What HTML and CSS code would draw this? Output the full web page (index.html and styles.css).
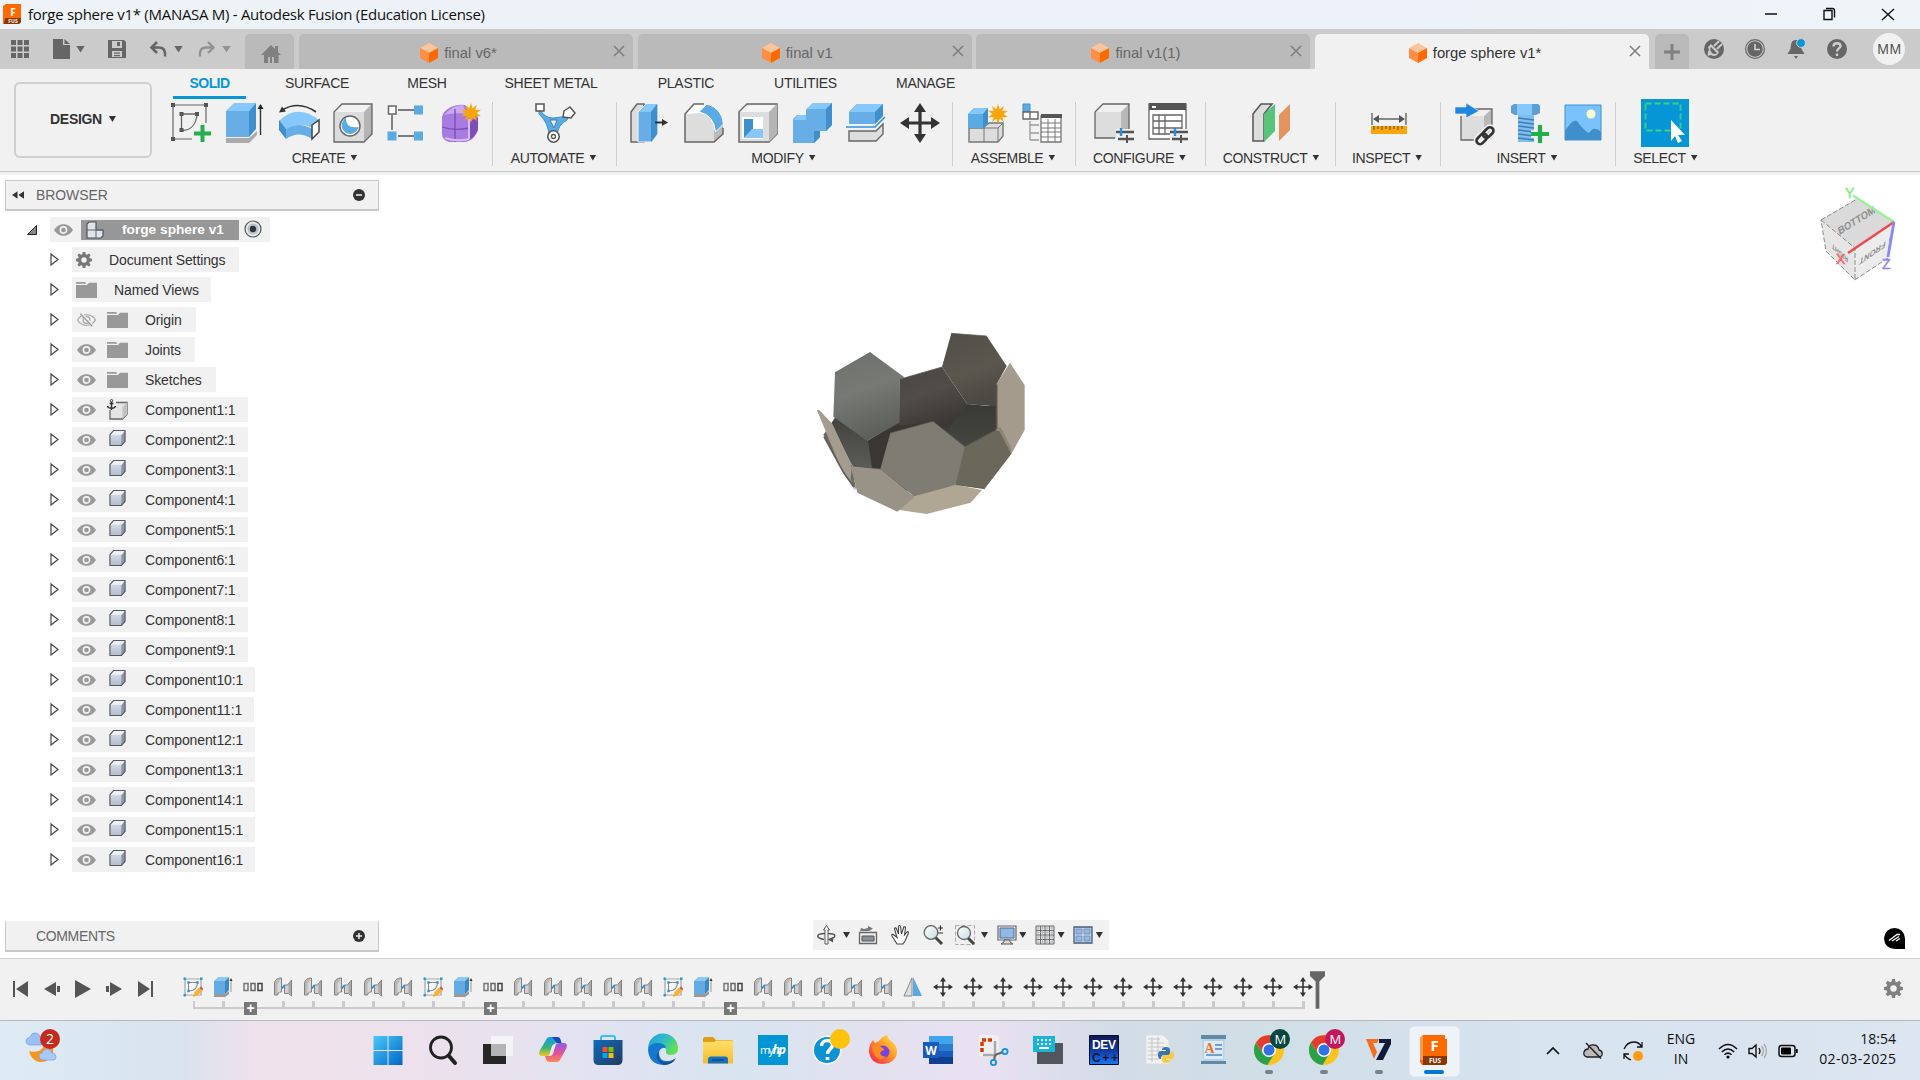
FILE: index.html
```html
<!DOCTYPE html>
<html lang="en">
<head>
<meta charset="utf-8">
<title>forge sphere v1* (MANASA M) - Autodesk Fusion (Education License)</title>
<link rel="stylesheet" href="styles.css">
</head>
<body>
<svg class="defs" aria-hidden="true">
  <defs>
    <linearGradient id="gWin" x1="0" y1="0" x2="1" y2="1"><stop offset="0" stop-color="#4cc8f8"/><stop offset="1" stop-color="#0067c8"/></linearGradient>
    <linearGradient id="gStore" x1="0" y1="0" x2="1" y2="1"><stop offset="0" stop-color="#0f6cbd"/><stop offset="1" stop-color="#243a5e"/></linearGradient>
    <linearGradient id="gEdge" x1="0" y1="0" x2="1" y2=".6"><stop offset="0" stop-color="#1f9fe0"/><stop offset=".5" stop-color="#2ebbc8"/><stop offset="1" stop-color="#63e04f"/></linearGradient>
    <linearGradient id="gFold" x1="0" y1="0" x2="0" y2="1"><stop offset="0" stop-color="#ffdf6b"/><stop offset="1" stop-color="#f7bd2b"/></linearGradient>
    <linearGradient id="gFox" x1="1" y1="0" x2="0" y2="1"><stop offset="0" stop-color="#fff04f"/><stop offset=".45" stop-color="#ff9426"/><stop offset="1" stop-color="#f5155e"/></linearGradient>
    <linearGradient id="gDev" x1="0" y1="0" x2="0" y2="1"><stop offset="0" stop-color="#101850"/><stop offset=".5" stop-color="#1238a0"/><stop offset="1" stop-color="#1c78ee"/></linearGradient>
    <linearGradient id="gCopA" x1="0" y1="0" x2="0" y2="1"><stop offset="0" stop-color="#169be8"/><stop offset=".55" stop-color="#36b27a"/><stop offset="1" stop-color="#f4c81c"/></linearGradient>
    <linearGradient id="gCopB" x1="0" y1="0" x2="0" y2="1"><stop offset="0" stop-color="#8d5cf0"/><stop offset=".5" stop-color="#e0509c"/><stop offset="1" stop-color="#fa8a52"/></linearGradient>
    <linearGradient id="gBody" x1="0" y1="0" x2="0" y2="1"><stop offset="0" stop-color="#dfe3ee"/><stop offset="1" stop-color="#b4bccd"/></linearGradient>
    <linearGradient id="gLens" x1="0" y1="0" x2="1" y2="1"><stop offset="0" stop-color="#fff"/><stop offset="1" stop-color="#c4dce0"/></linearGradient>
  </defs>

  <symbol id="cube" viewBox="0 0 18 20"><path d="M9 0l9 5-9 5-9-5z" fill="#ffc39a"/><path d="M0 5l9 5v10l-9-5z" fill="#ff8f45"/><path d="M18 5l-9 5v10l9-5z" fill="#ff6a00"/></symbol>
  <symbol id="x" viewBox="0 0 12 12"><path d="M1 1l10 10M11 1L1 11" stroke="currentColor" stroke-width="1.6" fill="none"/></symbol>
  <symbol id="eye" viewBox="0 0 20 12"><path d="M0 6C3 1.500 6.500 0 10 0s7 1.500 10 6c-3 4.500-6.500 6-10 6S3 10.500 0 6z" fill="#999"/><circle cx="10" cy="6" r="3.300" fill="none" stroke="#f1f1f1" stroke-width="1.700"/></symbol>
  <symbol id="eyeoff" viewBox="0 0 20 14"><path d="M.5 7C3 3 6.500 1.500 10 1.500S17 3 19.500 7c-2.500 4-6 5.500-9.500 5.500S3 11 .5 7z" fill="none" stroke="#a0a0a0" stroke-width="1.200"/><circle cx="10" cy="7" r="3.600" fill="none" stroke="#a0a0a0" stroke-width="1.300"/><path d="M4.500 .5l12 13" stroke="#f1f1f1" stroke-width="3"/><path d="M3.500 .5l12.500 13" stroke="#999" stroke-width="1.400"/></symbol>
  <symbol id="folder" viewBox="0 0 21 16"><path d="M0 0h9l1.500 1.800h-10.500z" fill="#999"/><path d="M0 3h11l2-2.200h8V16H0z" fill="#999"/></symbol>
  <symbol id="gear" viewBox="0 0 20 20"><path fill-rule="evenodd" fill="currentColor" d="M8.400 0h3.200l.5 2.800 1.600.7L16 1.900 18.200 4.100l-1.600 2.300.6 1.500 2.800.5v3.200l-2.800.5-.6 1.600 1.600 2.300-2.200 2.200-2.300-1.600-1.600.6-.5 2.800H8.400l-.5-2.800-1.600-.6L4 18.200 1.800 16l1.600-2.300-.6-1.600L0 11.600V8.400l2.800-.5.600-1.500L1.800 4.100 4 1.900l2.300 1.600 1.600-.7zM10 6.600a3.400 3.400 0 100 6.800 3.400 3.400 0 000-6.800z"/></symbol>
  <symbol id="body" viewBox="0 0 18 18"><path d="M1 5.500L5 1h12v11.500l-4 4.500H1z" fill="url(#gBody)"/><path d="M13 5.500L17 1v11.500L13 17z" fill="#8d96a6"/><path d="M1.500 5.500L5 1h12l-3.500 4.500z" fill="#eef0f6"/><path d="M1 5.500L5 1h12v11.500l-4 4.500H1z" fill="none" stroke="#54585f" stroke-width="1.200" stroke-linejoin="round"/></symbol>
  <symbol id="anchorbody" viewBox="0 0 21 21"><path d="M3 8.500L7 3.500h13v12L15.500 20H3z" fill="#e4e4e4" stroke="#666" stroke-width="1.300"/><path d="M15.500 8L20 3.500v12L15.500 20z" fill="#c2c2c2"/><path d="M0 0h9v11H0z" fill="#f1f1f1"/><path d="M4.500 3v8M2.500 4.500h4M.6 7c.2 3 7.600 3 7.800 0" fill="none" stroke="#333" stroke-width="1.500"/><circle cx="4.500" cy="1.700" r="1.200" fill="none" stroke="#333"/></symbol>
  <symbol id="tri" viewBox="0 0 9 13"><path d="M1 1l7 5.500L1 12z" fill="#fff" stroke="#444" stroke-width="1.200"/></symbol>

  <symbol id="t-sketch" viewBox="0 0 20 20"><path d="M2 2h16v16H2z" fill="#f8f8f8" stroke="#a4a4a4" stroke-width="1.200"/><path d="M5.500 14V5.500h9c0 5-3 8.500-9 8.500" fill="none" stroke="#8a8a8a" stroke-width="1.100"/><g fill="#2f94e0"><path d="M.5 .5h2.500v2.500H.5zM17 .5h2.500v2.500h-2.500zM.5 17h2.500v2.500H.5zM4.300 4.300h2.400v2.400H4.300zM13.300 4.300h2.400v2.400h-2.400zM4.300 12.800h2.400v2.400H4.300z"/></g><path d="M10 20l1.500-5 5-4.500 3 3-5 5z" fill="#f6b335"/><path d="M16.500 11l1.500-1.500 2 2-.5 2z" fill="#f5413c"/></symbol>
  <symbol id="t-extrude" viewBox="0 0 20 20"><path d="M1 17h11l4-3v3l-4 3H1z" fill="#999"/><path d="M1 4l4-4h11l-4 4z" fill="#8cc8f5"/><path d="M1 4h11v13H1z" fill="#64abe3"/><path d="M12 4l4-4v13l-4 4z" fill="#3b89c4"/><path d="M18 15V3" stroke="#999" stroke-width="1"/><path d="M16.500 4l1.500-3 1.500 3z" fill="#333"/></symbol>
  <symbol id="t-pattern" viewBox="0 0 20 10"><g fill="none" stroke-width="1.500"><path d="M1 1.500h4v7H1z" stroke="#777"/><path d="M8 1.500h4v7H8z" stroke="#666"/><path d="M15 1.500h4v7h-4z" stroke="#3f3f3f"/></g></symbol>
  <symbol id="t-joint" viewBox="0 0 20 20"><path d="M1.500 18V7C1.500 3 4 1 8.500 1v14H6l-1.500 3z" fill="#b9b9b9" stroke="#808080"/><path d="M4.500 16V7l3.500-5.500V14z" fill="#d8d8d8"/><path d="M18.500 3v16l-3-2.500h-4V8h3z" fill="#cfcfcf" stroke="#808080"/><path d="M15.500 16V7.500l2.500-4v14z" fill="#a8a8a8"/><path d="M9 11.500l2.500-3.500" stroke="#2f94e0" stroke-width="2"/></symbol>
  <symbol id="t-mirror" viewBox="0 0 20 20"><path d="M9 1v18H1z" fill="#ddd" stroke="#888"/><path d="M10 0l9 19h-9z" fill="#5aa9e0"/></symbol>
  <symbol id="move" viewBox="0 0 20 20"><path d="M10 0l3 4.500h-2.200v4.700h4.700V7l4.500 3-4.500 3v-2.200h-4.700v4.700H13l-3 4.500-3-4.500h2.200v-4.700H4.500V13L0 10l4.500-3v2.200h4.700V4.500H7z" fill="#333"/></symbol>
  <symbol id="spark" viewBox="0 0 20 20"><path d="M10 0l1.700 5.200L16 1.900l-1.800 5L20 6.700 15.600 10l4.400 3.300-5.800-.2 1.800 5-4.300-3.300L10 20l-1.700-5.200L4 18.100l1.800-5-5.800.2L4.400 10 0 6.700l5.800.2-1.800-5 4.300 3.300z" fill="#faa50a"/></symbol>
  <symbol id="chrome" viewBox="0 0 30 30"><circle cx="15" cy="15" r="15" fill="#fcc31e"/><path d="M2 7.500A15 15 0 0013.500 30l7-11.500-11.500 0z" fill="#2c9f4b"/><path d="M2 7.500A15 15 0 0128 7.800H15L9 18z" fill="#e33b2e"/><circle cx="15" cy="15" r="7" fill="#fff"/><circle cx="15" cy="15" r="5.500" fill="#2f72e8"/></symbol>
  <symbol id="plus" viewBox="0 0 17 17"><path d="M6 0h5v6h6v5h-6v6H6v-6H0V6h6z" fill="#f1f1f1" stroke="#f1f1f1" stroke-width="2"/><path d="M6.500 0h4v6.500H17v4h-6.500V17h-4v-6.500H0v-4h6.500z" fill="#22b04d"/></symbol>
</svg>

<header class="titlebar">
  <svg class="app-icon" viewBox="0 0 18 20"><path d="M0 2l3-2h15v18l-2 2H0z" fill="#ff6a00"/><path d="M2 14h16v4l-2 2H1z" fill="#8a3600"/><text x="10" y="11.500" class="svg-f">F</text><text x="10" y="18.500" class="svg-tiny">FUS</text></svg>
  <span class="title">forge sphere v1* (MANASA M) - Autodesk Fusion (Education License)</span>
  <svg class="win-btns" viewBox="0 0 160 30"><g fill="none" stroke="#111" stroke-width="1.400"><path d="M5 14h12M64 10.500h8v9h-8zM66 8.500h6.500q2 0 2 2v7"/><path d="M122 9l12 11M134 9l-12 11"/></g></svg>
</header>

<nav class="tabbar">
  <div class="quick">
    <svg class="q-grid" viewBox="0 0 18 18"><path fill="#666" d="M0 0h5v5H0zM6.500 0h5v5h-5zM13 0h5v5h-5zM0 6.500h5v5H0zM6.500 6.500h5v5h-5zM13 6.500h5v5h-5zM0 13h5v5H0zM6.500 13h5v5h-5zM13 13h5v5h-5z"/></svg>
    <svg class="q-doc" viewBox="0 0 17 20"><path fill="#666" d="M0 0h10v6h7v14H0zM11.500 0L17 5h-5.500z"/></svg><i class="caret big"></i>
    <svg class="q-save" viewBox="0 0 18 18"><path fill="#666" fill-rule="evenodd" d="M0 0h16l2 2v16H0zM4 1v7h10V1zM4 11v6h10v-6z"/><path fill="#666" d="M9 2h3v4H9zM6 12.500h6v1.200H6zM6 15h6v1.200H6z"/></svg>
    <svg class="q-undo" viewBox="0 0 17 17"><path d="M7 1L1.500 6.500 7 12M2 6.500h7q7 0 6 9" fill="none" stroke="#666" stroke-width="2.600"/></svg><i class="caret big"></i>
    <svg class="q-redo" viewBox="0 0 17 17"><path d="M10 1l5.500 5.500L10 12M15 6.500H8q-7 0-6 9" fill="none" stroke="#929292" stroke-width="2.400"/></svg><i class="caret big dim"></i>
  </div>
  <div class="tab home"><svg viewBox="0 0 20 18"><path d="M10 0l4 4V1h3v6l3 3h-2.500v8H13v-6H11v6H9v-6H7v6H3v-8H0z" fill="#808080"/></svg></div>
  <div class="tab"><svg class="cube"><use href="#cube"/></svg><span>final v6*</span><svg class="close"><use href="#x"/></svg></div>
  <div class="tab"><svg class="cube"><use href="#cube"/></svg><span>final v1</span><svg class="close"><use href="#x"/></svg></div>
  <div class="tab"><svg class="cube"><use href="#cube"/></svg><span>final v1(1)</span><svg class="close"><use href="#x"/></svg></div>
  <div class="tab active"><svg class="cube"><use href="#cube"/></svg><span>forge sphere v1*</span><svg class="close"><use href="#x"/></svg></div>
  <div class="tab add"><svg viewBox="0 0 16 16"><path d="M8 0v16M0 8h16" stroke="#808080" stroke-width="3"/></svg></div>
  <div class="status">
    <svg viewBox="0 0 20 20"><circle cx="10" cy="10" r="10" fill="#666"/><path d="M4 17q-1-4 1-6l-1-3 3-3 4 4 4 4-2 3q-3 2-6 0z" fill="#cbcbcb"/><path d="M8 14q-3-4-1-6l6 6q-2 2-5 0z" fill="#666"/><path d="M10 7l5-5M13 10l5-5" stroke="#cbcbcb" stroke-width="2"/></svg>
    <svg viewBox="0 0 20 20"><circle cx="10" cy="10" r="9.400" fill="none" stroke="#666" stroke-width="1.200"/><circle cx="10" cy="10" r="7.700" fill="#666"/><path d="M10 5v5.500h5" fill="none" stroke="#d6d6d6" stroke-width="1.500"/></svg>
    <svg viewBox="0 0 20 20"><path d="M10 1c5 0 5 4 5.500 9l3 5h-17l3-5C5 5 5 1 10 1zM8 17h4l-2 3z" fill="#666"/><circle cx="15" cy="4" r="4.400" fill="#0696d7" stroke="#cbcbcb"/></svg>
    <svg viewBox="0 0 20 20"><circle cx="10" cy="10" r="10" fill="#666"/><path d="M6.500 7.500c0-4.500 7-4 7-.5 0 2.500-3.500 2.500-3.500 5.500M10 14.500V17" fill="none" stroke="#d0d0d0" stroke-width="2.300"/></svg>
    <b class="avatar">MM</b>
  </div>
</nav>

<section class="ribbon">
  <div class="workspace">DESIGN<i class="caret"></i></div>
  <div class="ribbon-main">
    <div class="rtabs"><span class="on">SOLID</span><span>SURFACE</span><span>MESH</span><span>SHEET METAL</span><span>PLASTIC</span><span>UTILITIES</span><span>MANAGE</span></div>
    <div class="panels">
      <div class="panel create"><div class="icons">
        <svg viewBox="0 0 40 40"><path d="M2 2h33M35 2v18M2 2v34h19" fill="none" stroke="#666" stroke-width="1.200"/><path d="M10.500 11h15M10.500 11v15M26 12c-1 9-6 15-14 15.500" fill="none" stroke="#666" stroke-width="1.300"/><path d="M0 0h4v4H0zM33 0h4v4h-4zM0 34h4v4H0zM8.500 9h4v4h-4zM24 9h4v4h-4zM8.500 25h4v4h-4z" fill="#555"/><use href="#plus" x="23" y="22" width="17" height="17"/></svg>
        <svg viewBox="0 0 40 40"><path d="M1 35h23l8-7v4l-8 8H1z" fill="#aaa"/><path d="M1 8l8-8h22l-7 8z" fill="#86c8fb"/><path d="M1 8h23v26H1z" fill="#67aee6"/><path d="M24 8l7-8v26l-7 8z" fill="#3f8fcd"/><path d="M35.500 32V5" stroke="#333" stroke-width="1.400"/><path d="M32.500 6l3-5 3 5z" fill="#222"/></svg>
        <svg viewBox="0 0 40 40"><path d="M3 7q17-10 34 2" fill="none" stroke="#333" stroke-width="1.600"/><path d="M0 9.500l3-6 4 5z" fill="#333"/><path d="M0 18q18-18 40-1l-7 8q-12-7-26 1z" fill="#86c8fb"/><path d="M0 17l7 9v10l-7-9z" fill="#3f8fcd"/><path d="M7 26q13-8 26 0v10q-13-9-26 0z" fill="#67aee6"/><path d="M33 22l7-5v12l-7 7z" fill="#fff" stroke="#444" stroke-width="1.500"/></svg>
        <svg viewBox="0 0 40 40"><path d="M1 9l8-8h30v30l-8 8H1z" fill="#dcdcdc"/><path d="M2 9l7-8h29l-7 8z" fill="#f2f2f2"/><path d="M31 9l8-8v30l-8 8z" fill="#b5b5b5"/><path d="M1 9l8-8h30v30l-8 8H1z" fill="none" stroke="#666" stroke-width="1.300"/><circle cx="17" cy="23" r="10" fill="#fff" stroke="#666" stroke-width="1.500"/><path d="M13 15a8.500 8.500 0 1012.500 9q-13 2-12.500-9z" fill="#5aaae4"/></svg>
        <svg viewBox="0 0 40 40"><path d="M11 7h16M5 12v15M11 33h16" fill="none" stroke="#555" stroke-width="1.400"/><path d="M1.500 3h7.500v8H1.500z" fill="#fff" stroke="#666" stroke-width="1.500"/><path d="M27 2.500h9v9h-9zM.5 28.500h9v9h-9zM27 28.500h9v9h-9z" fill="#5aaae4"/></svg>
        <svg viewBox="0 0 40 40"><path d="M1 14Q2 8 10 4q7-3 14-2l13 12v12q-3 11-12 13H8q-7-2-7-8z" fill="#a77be0"/><path d="M28 18l9-3v12q-3 7-9 10z" fill="#7d4fb8"/><path d="M3 12Q12 2 22 2l4 9q-13-2-23 1z" fill="#c9a8f3"/><path d="M14 6v33M1 24q12 4 27 1l9-5" fill="none" stroke="#7a4cb4" stroke-width="1.300"/><path d="M28 16v20M4 35q12 4 24 1" fill="none" stroke="#d5bdf6" stroke-width="2"/><use href="#spark" x="20" y="0" width="20" height="20"/></svg>
      </div><p>CREATE<i class="caret"></i></p></div>
      <div class="panel automate"><div class="icons">
        <svg viewBox="0 0 40 40"><path d="M4 5q5 10 14 10 9 0 16-4l-2 6q-10 5-10 17l-8 0q0-14-10-23z" fill="#5aaae4" stroke="#3f8fcd"/><path d="M15 17h7l-3 8z" fill="#f1f1f1" stroke="#3a7fb8"/><path d="M1 1h8v7H1z" fill="#fff" stroke="#555" stroke-width="1.500"/><path d="M29 8l6-4 5 6-4 5-8-1z" fill="#fff" stroke="#555" stroke-width="1.500"/><circle cx="18.500" cy="33.500" r="5.700" fill="#fff" stroke="#555" stroke-width="1.600"/><circle cx="18.500" cy="33.500" r="2" fill="none" stroke="#555" stroke-width="1.300"/></svg>
      </div><p>AUTOMATE<i class="caret"></i></p></div>
      <div class="panel modify"><div class="icons">
        <svg viewBox="0 0 40 40"><path d="M1 9l6-8h7v38H1z" fill="#dcdcdc" stroke="#666" stroke-width="1.500"/><path d="M8 9l8-8h12v30l-6 8H8z" fill="#67aee6" stroke="#f1f1f1"/><path d="M9 9l7-8h11l-6 8z" fill="#86c8fb"/><path d="M21 9l6-8v30l-6 8z" fill="#3f8fcd"/><path d="M25 19.500h8" stroke="#333" stroke-width="2"/><path d="M32 16l6 3.500-6 3.500z" fill="#333"/></svg>
        <svg viewBox="0 0 40 40"><path d="M1 11l9-10h9l-4 8q14 3 15 18v12H1z" fill="#ddd"/><path d="M2 11l8-10h9l-4 9z" fill="#fff"/><path d="M30 27l9-6v10l-9 8z" fill="#bbb"/><path d="M39 25v6l-9 8H1V11l9-10h10" fill="none" stroke="#666" stroke-width="1.500"/><path d="M15 9l8-8q15 4 16.500 20l-8 8Q30 12 15 9z" fill="#5aaae4" stroke="#fff"/></svg>
        <svg viewBox="0 0 40 40"><path d="M1 9l8-8h30v30l-8 8H1z" fill="#ddd" stroke="#666" stroke-width="1.500"/><path d="M2 9l7-7h29l-7 7z" fill="#f4f4f4"/><path d="M31 9l8-8v30l-8 8z" fill="#b5b5b5"/><path d="M4 14h21v22H4z" fill="#fff"/><path d="M6 16h9v11l-9 8z" fill="#3f8fcd"/><path d="M14 26h11v9H6z" fill="#86c8fb"/></svg>
        <svg viewBox="0 0 40 40"><path d="M1 16l4-4h9V7l7-7h19v22l-6 6h-6v6l-6 6H1z" fill="#67aee6"/><path d="M14 6l7-6h19l-6 6zM1 17l5-5h8v5z" fill="#86c8fb"/><path d="M34 6l6-6v22l-6 6zM22 28h6v6l-6 6z" fill="#3f8fcd"/></svg>
        <svg viewBox="0 0 40 40"><path d="M3 9l8-8h26v12l-8 8H3z" fill="#67aee6"/><path d="M3 9l8-8h26l-8 8z" fill="#86c8fb"/><path d="M29 9l8-8v12l-8 8z" fill="#3f8fcd"/><path d="M0 24h29l10-10" fill="none" stroke="#2f94e0" stroke-width="1.600"/><path d="M3 28h27l7-7v10l-7 7H3z" fill="#ddd" stroke="#666" stroke-width="1.400"/></svg>
        <svg viewBox="0 0 40 40"><use href="#move" width="40" height="40"/></svg>
      </div><p>MODIFY<i class="caret"></i></p></div>
      <div class="panel assemble"><div class="icons">
        <svg viewBox="0 0 40 40"><path d="M1 25h15v-1l5-4h14v13l-5 6H1z" fill="#ddd" stroke="#777" stroke-width="1.400"/><path d="M16 25v14M16 25h14l5-5M30 25v14" fill="none" stroke="#777"/><path d="M0 11l6-6h14v15l-5 5H0z" fill="#5aaae4"/><path d="M0 11l6-6h14l-5 6z" fill="#86c8fb"/><path d="M15 11l5-6v15l-5 5z" fill="#3f8fcd"/><use href="#spark" x="20" y="1" width="20" height="20"/></svg>
        <svg viewBox="0 0 40 40"><path d="M1 1h7v8H1z" fill="#5aaae4" stroke="#3f8fcd"/><path d="M1 9h7v7H1zM8 9h8v7H8z" fill="#fff" stroke="#666" stroke-width="1.400"/><path d="M8 18v19M8 22h9M8 30h9M8 37h9" fill="none" stroke="#999" stroke-width="1.300"/><path d="M19 13h20v26H19z" fill="#fff" stroke="#777" stroke-width="1.300"/><path d="M19 11h21v4H19z" fill="#555"/><path d="M19 20h20M19 25h20M19 29h20M19 34h20M26 16v23M33 16v23" stroke="#777"/></svg>
      </div><p>ASSEMBLE<i class="caret"></i></p></div>
      <div class="panel configure"><div class="icons">
        <svg viewBox="0 0 40 40"><path d="M1 9l8-8h26v34H1z" fill="#ddd"/><path d="M2 9l7-8h26l-8 8z" fill="#f0f0f0"/><path d="M27 9l8-8v34h-8z" fill="#b8b8b8"/><path d="M1 9l8-8h26v27M1 9v26h20" fill="none" stroke="#666" stroke-width="1.300"/><path d="M22 26h18v14H22z" fill="#f1f1f1"/><path d="M22 29h18M24 36h16" stroke="#555" stroke-width="2.300"/><path d="M33 32v8" stroke="#555" stroke-width="2"/><path d="M27 25v8" stroke="#2090e0" stroke-width="2.400"/></svg>
        <svg viewBox="0 0 40 40"><path d="M1 1h37v35H1z" fill="#fff" stroke="#666" stroke-width="1.300"/><path d="M1 0h37v7H1z" fill="#555"/><path d="M4 3h4v2H4z" fill="#fff"/><path d="M5 12h29v19H5zM5 18h29M5 25h29M11 12v19M17 12v19" fill="none" stroke="#666" stroke-width="1.300"/><path d="M22 26h18v14H22z" fill="#f1f1f1"/><path d="M22 29h18M24 36h16" stroke="#555" stroke-width="2.300"/><path d="M33 32v8" stroke="#555" stroke-width="2"/><path d="M27 25v8" stroke="#2090e0" stroke-width="2.400"/></svg>
      </div><p>CONFIGURE<i class="caret"></i></p></div>
      <div class="panel construct"><div class="icons">
        <svg viewBox="0 0 40 40"><path d="M2 11l8-10h11L13 11v27H2z" fill="#ddd" stroke="#555" stroke-width="1.500"/><path d="M13 11L24 1v27L13 39z" fill="#57c47a"/><path d="M28 12L39 1v26L28 38z" fill="#e3935d"/></svg>
      </div><p>CONSTRUCT<i class="caret"></i></p></div>
      <div class="panel inspect"><div class="icons">
        <svg viewBox="0 0 40 40"><path d="M3 10v12M37 10v12M5 16h30" stroke="#666" stroke-width="1.400"/><path d="M4 16l6-4v8zM36 16l-6-4v8z" fill="#555"/><path d="M2 23h36v8H2z" fill="#faa50a"/><path d="M5 23v4M9 23v3M13 23v4M17 23v3M21 23v4M25 23v3M29 23v4M33 23v3" stroke="#7a5510" stroke-width="1.200"/></svg>
      </div><p>INSPECT<i class="caret"></i></p></div>
      <div class="panel insert"><div class="icons">
        <svg viewBox="0 0 40 40"><path d="M6 13l8-7h23v31H6z" fill="#ddd"/><path d="M7 13l7-7h23l-8 7z" fill="#f0f0f0"/><path d="M29 13l8-7v25l-8 6z" fill="#b8b8b8"/><path d="M6 13v24h15M14 6h23v18" fill="none" stroke="#666" stroke-width="1.300"/><path d="M0 4h11V0l13 8-13 7v-4H0z" fill="#1e88e0" stroke="#f1f1f1" stroke-width=".6"/><g transform="rotate(-45 30 32)" fill="none" stroke="#f1f1f1" stroke-width="6"><rect x="19" y="29" width="11" height="7" rx="3.500"/><rect x="29" y="29" width="11" height="7" rx="3.500"/></g><g transform="rotate(-45 30 32)" fill="none" stroke="#333" stroke-width="2.700"><rect x="19" y="29" width="12" height="7" rx="3.500"/><rect x="28" y="29" width="12" height="7" rx="3.500"/></g></svg>
        <svg viewBox="0 0 40 40"><path d="M2 3l3-2h24l2 2v7l-4 2H6l-4-2z" fill="#5c9fd4"/><path d="M8 1h15v11H8z" fill="#86c8fb"/><path d="M9 12h16v27H9z" fill="#7dbdf0"/><path d="M9 15l16 2M9 19l16 2M9 23l16 2M9 27l16 2M9 31l16 2M9 35l16 2" stroke="#3f7fb5" stroke-width="1.400"/><use href="#plus" x="22" y="22" width="18" height="18"/></svg>
        <svg viewBox="0 0 40 40"><path d="M2 2h36v35H2z" fill="#79c2fb" stroke="#3f8fcd"/><path d="M2 28q8-13 12-10 7 10 12 12 5-8 12-1v8H2z" fill="#3f8fcd"/><circle cx="28" cy="11" r="4.500" fill="#ffffc8"/></svg>
      </div><p>INSERT<i class="caret"></i></p></div>
      <div class="panel select"><div class="icons">
        <svg viewBox="0 0 48 48"><path d="M0 0h48v48H0z" fill="#0696d7"/><path d="M4.500 4.500h35v27h-35z" fill="none" stroke="#3fce82" stroke-width="1.800" stroke-dasharray="6 3"/><path d="M30 21l14 15h-7l4 6-4 2-3-7-4 5z" fill="#fff"/></svg>
      </div><p>SELECT<i class="caret"></i></p></div>
    </div>
  </div>
</section>

<main class="canvas">
  <aside class="browser">
    <div class="dock-head">
      <svg class="rewind" viewBox="0 0 13 8"><path d="M6 0v8L0 4zM13 0v8L7 4z" fill="#333"/></svg><span>BROWSER</span>
      <svg class="knob" viewBox="0 0 12 12"><circle cx="6" cy="6" r="6" fill="#333"/><path d="M3 6h6" stroke="#eee" stroke-width="1.600"/></svg>
    </div>
    <ul class="tree">
      <li class="root"><svg class="open" viewBox="0 0 10 10"><path d="M9.500 .5v9h-9z" fill="#888" stroke="#222"/></svg><div class="chip"><svg class="eye"><use href="#eye"/></svg><div class="sel"><svg class="asm" viewBox="0 0 18 18"><path d="M1 3l2-2h7v8h7v6l-2 2H1z" fill="#dfe3ec" stroke="#4f535a" stroke-width="1.200"/><path d="M1 9h9v8M10 9h6" fill="none" stroke="#666"/></svg><b>forge sphere v1</b></div><svg class="radio" viewBox="0 0 18 18"><circle cx="9" cy="9" r="8" fill="#e8e8ee" stroke="#555" stroke-width="1.200"/><circle cx="9" cy="9" r="5.500" fill="#b5bfce"/><circle cx="9" cy="9" r="3.200" fill="#333"/></svg></div></li>
      <li><svg class="tri"><use href="#tri"/></svg><div class="chip nf"><svg class="gear"><use href="#gear"/></svg><span>Document Settings</span></div></li>
      <li><svg class="tri"><use href="#tri"/></svg><div class="chip nv"><svg class="folder"><use href="#folder"/></svg><span>Named Views</span></div></li>
      <li><svg class="tri"><use href="#tri"/></svg><div class="chip"><svg class="eye off"><use href="#eyeoff"/></svg><svg class="folder"><use href="#folder"/></svg><span>Origin</span></div></li>
      <li><svg class="tri"><use href="#tri"/></svg><div class="chip"><svg class="eye"><use href="#eye"/></svg><svg class="folder"><use href="#folder"/></svg><span>Joints</span></div></li>
      <li><svg class="tri"><use href="#tri"/></svg><div class="chip"><svg class="eye"><use href="#eye"/></svg><svg class="folder"><use href="#folder"/></svg><span>Sketches</span></div></li>
      <li><svg class="tri"><use href="#tri"/></svg><div class="chip comp"><svg class="eye"><use href="#eye"/></svg><svg class="anchor"><use href="#anchorbody"/></svg><span>Component1:1</span></div></li>
      <li><svg class="tri"><use href="#tri"/></svg><div class="chip comp"><svg class="eye"><use href="#eye"/></svg><svg class="body"><use href="#body"/></svg><span>Component2:1</span></div></li>
      <li><svg class="tri"><use href="#tri"/></svg><div class="chip comp"><svg class="eye"><use href="#eye"/></svg><svg class="body"><use href="#body"/></svg><span>Component3:1</span></div></li>
      <li><svg class="tri"><use href="#tri"/></svg><div class="chip comp"><svg class="eye"><use href="#eye"/></svg><svg class="body"><use href="#body"/></svg><span>Component4:1</span></div></li>
      <li><svg class="tri"><use href="#tri"/></svg><div class="chip comp"><svg class="eye"><use href="#eye"/></svg><svg class="body"><use href="#body"/></svg><span>Component5:1</span></div></li>
      <li><svg class="tri"><use href="#tri"/></svg><div class="chip comp"><svg class="eye"><use href="#eye"/></svg><svg class="body"><use href="#body"/></svg><span>Component6:1</span></div></li>
      <li><svg class="tri"><use href="#tri"/></svg><div class="chip comp"><svg class="eye"><use href="#eye"/></svg><svg class="body"><use href="#body"/></svg><span>Component7:1</span></div></li>
      <li><svg class="tri"><use href="#tri"/></svg><div class="chip comp"><svg class="eye"><use href="#eye"/></svg><svg class="body"><use href="#body"/></svg><span>Component8:1</span></div></li>
      <li><svg class="tri"><use href="#tri"/></svg><div class="chip comp"><svg class="eye"><use href="#eye"/></svg><svg class="body"><use href="#body"/></svg><span>Component9:1</span></div></li>
      <li><svg class="tri"><use href="#tri"/></svg><div class="chip comp"><svg class="eye"><use href="#eye"/></svg><svg class="body"><use href="#body"/></svg><span>Component10:1</span></div></li>
      <li><svg class="tri"><use href="#tri"/></svg><div class="chip comp"><svg class="eye"><use href="#eye"/></svg><svg class="body"><use href="#body"/></svg><span>Component11:1</span></div></li>
      <li><svg class="tri"><use href="#tri"/></svg><div class="chip comp"><svg class="eye"><use href="#eye"/></svg><svg class="body"><use href="#body"/></svg><span>Component12:1</span></div></li>
      <li><svg class="tri"><use href="#tri"/></svg><div class="chip comp"><svg class="eye"><use href="#eye"/></svg><svg class="body"><use href="#body"/></svg><span>Component13:1</span></div></li>
      <li><svg class="tri"><use href="#tri"/></svg><div class="chip comp"><svg class="eye"><use href="#eye"/></svg><svg class="body"><use href="#body"/></svg><span>Component14:1</span></div></li>
      <li><svg class="tri"><use href="#tri"/></svg><div class="chip comp"><svg class="eye"><use href="#eye"/></svg><svg class="body"><use href="#body"/></svg><span>Component15:1</span></div></li>
      <li><svg class="tri"><use href="#tri"/></svg><div class="chip comp"><svg class="eye"><use href="#eye"/></svg><svg class="body"><use href="#body"/></svg><span>Component16:1</span></div></li>
    </ul>
    <div class="dock-head comments"><span>COMMENTS</span><svg class="knob" viewBox="0 0 12 12"><circle cx="6" cy="6" r="6" fill="#333"/><path d="M3 6h6M6 3v6" stroke="#eee" stroke-width="1.500"/></svg></div>
  </aside>

  <svg class="model" viewBox="0 0 840 660">
    <defs>
      <linearGradient id="m1" x1="0" y1="0" x2=".3" y2="1"><stop offset="0" stop-color="#6d706b"/><stop offset=".5" stop-color="#777a74"/><stop offset="1" stop-color="#5e605b"/></linearGradient>
      <linearGradient id="m2" x1="0" y1="0" x2=".4" y2="1"><stop offset="0" stop-color="#4a4641"/><stop offset=".5" stop-color="#504c48"/><stop offset="1" stop-color="#3b3835"/></linearGradient>
      <linearGradient id="m3" x1="0" y1="0" x2=".3" y2="1"><stop offset="0" stop-color="#514e47"/><stop offset=".6" stop-color="#5b574f"/><stop offset="1" stop-color="#4c4942"/></linearGradient>
      <linearGradient id="m4" x1="0" y1="0" x2="0" y2="1"><stop offset="0" stop-color="#3a3a35"/><stop offset="1" stop-color="#464640"/></linearGradient>
      <linearGradient id="m5" x1="0" y1="0" x2="0" y2="1"><stop offset="0" stop-color="#42433f"/><stop offset="1" stop-color="#5b5c58"/></linearGradient>
    </defs>
    <path d="M262 392l98-60 100-10 188-40v80l-34 174-90-14-200 30-110-76z" fill="#3a3733"/>
    <path d="M490 358l72-76 90 8v72l-96 50z" fill="url(#m4)"/>
    <path d="M358 208l128-37 76 112-60 76-42-24-103 12z" fill="url(#m2)"/>
    <path d="M514 70l106 8 60 90-30 55v66l-88-6-76-112z" fill="url(#m3)"/>
    <path d="M152 342l14-20 98 70 12 82-60-8z" fill="url(#m5)"/>
    <path d="M165 188l106-61 102 75-15 8v128l-96 54-102-72z" fill="url(#m1)"/>
    <path d="M130 374l24-32 62 126 12 70-34-46z" fill="#6d6a62"/>
    <path d="M111 301l6-2 40 42 59 126-4 40 16 38-40-58z" fill="#a49c8f"/>
    <path d="M132 380l60 110 30 40" fill="none" stroke="#5f5d56" stroke-width="5"/>
    <path d="M690 158l44 68v134l-40 72-45-72V223z" fill="#a49b8c"/>
    <path d="M650 223v134" stroke="#5a554b" stroke-width="5"/>
    <path d="M554 410l94-50 16 6 30 66-80 104-88-12z" fill="#6b675b"/>
    <path d="M652 352l42 80-2-22-30-58z" fill="#8c8577"/>
    <path d="M358 600l40-46 130-30 78 16-34 38-132 34z" fill="#afa793"/>
    <path d="M212 467l90 10 102 84-52 44-120-57z" fill="#999286"/>
    <path d="M331 369l128-35 96 76-28 115-125 34-101-82z" fill="#7f7c74"/>
    <g fill="none" stroke="#5c5a54" stroke-width="3" opacity=".7"><path d="M331 369l128-35 96 76 92-50M212 467l90 10M528 524l86 12"/><path d="M165 188l106-61M514 70l106 8M358 208l128-37"/></g>
  </svg>

  <svg class="viewcube" viewBox="1810 180 100 110">
    <path d="M1821 220l36-21 37 23-39 26z" fill="#dadada"/><path d="M1821 220l34 28-.5 32-28-29z" fill="#e6e6e6"/><path d="M1855 248l39-26-6 36-33.500 22z" fill="#ececec"/>
    <g fill="none" stroke="#888" stroke-dasharray="5 2"><path d="M1821 220l36-21M1821 220l34 28v32l-29-29zM1854.500 280l33.500-22 2-20"/></g>
    <text transform="matrix(.8 -.5 .3 .95 1839.500 235)" class="vc-face">BOTTOM</text>
    <text transform="matrix(-.8 .55 .15 -.95 1886 241)" class="vc-face small">FRONT</text>
    <text transform="matrix(-.65 -.6 0 -.9 1848 258)" class="vc-face tiny">RIGHT</text>
    <path d="M1853 195.500l41 26.500" stroke="#9af29a" stroke-width="2.600"/><path d="M1894 222l-46 31" stroke="#ea4c4c" stroke-width="2.400"/><path d="M1894 222l-6 35" stroke="#8a8af5" stroke-width="2.800"/>
    <text x="1845" y="198" class="vc-ax green">Y</text><text x="1836" y="264" class="vc-ax red">X</text><text x="1882" y="269" class="vc-ax blue">Z</text>
  </svg>

  <div class="navbar">
    <svg viewBox="0 0 20 20"><path d="M8 19V5H6.500L9.500 .5 12.500 5H11v14z" fill="#fff" stroke="#555"/><path d="M7 14.500C-2 13-1 8.500 8 8.500M11 8.500c9 0 9 4 1 6" fill="none" stroke="#555" stroke-width="1.400"/><path d="M16 12l-5 2.500 5 3z" fill="#555"/></svg><i class="caret"></i>
    <svg viewBox="0 0 20 20"><path d="M1.500 7.500h17v11h-17z" fill="#eee" stroke="#666" stroke-width="1.300"/><path d="M4 11h12v5H4z" fill="#8a9299" stroke="#555"/><path d="M2 6l1-3 3 1 4-1V1l5 2.500-4 2.500z" fill="#777"/></svg>
    <svg viewBox="0 0 20 20"><path d="M7 19l-5-8c-1-2 1-2 2-1l3 2.500L4.500 4c0-2 2-1 2 0l2 5V2c0-2 2-2 2 0l1 7 2-6c0-2 2-1 2 0l-1 7 2.500-3c1-1 2 0 1 2l-3 7-2 3z" fill="#fff" stroke="#444" stroke-width="1.100"/></svg>
    <svg viewBox="0 0 20 20"><path d="M12 12l7 7" stroke="#444" stroke-width="3"/><circle cx="8" cy="7.500" r="6.800" fill="url(#gLens)" stroke="#666" stroke-width="1.300"/><path d="M15 3h5M17.500 .5v5M15 8h5" stroke="#333" stroke-width="1.200"/></svg>
    <svg viewBox="0 0 20 20"><path d="M.5 .5h19v19H.5z" fill="none" stroke="#aaa" stroke-dasharray="4 2"/><path d="M13 13l6 6" stroke="#444" stroke-width="3"/><circle cx="9" cy="8" r="6.500" fill="url(#gLens)" stroke="#666" stroke-width="1.300"/></svg><i class="caret"></i>
    <svg viewBox="0 0 20 20"><path d="M1 1h18v14H1z" fill="#eee" stroke="#666" stroke-width="1.200"/><path d="M3 3h14v10H3z" fill="#92b8e4" stroke="#4a6c98"/><path d="M7 15h6v2l3 2H4l3-2z" fill="#ddd" stroke="#555"/></svg><i class="caret"></i>
    <svg viewBox="0 0 20 20"><path d="M1 1h18v18H1z" fill="#eceef2"/><path d="M1 1h18v18H1zM5.500 1v18M10 1v18M14.500 1v18M1 5.500h18M1 10h18M1 14.500h18" stroke="#666" fill="none"/><path d="M3 1v18M7.500 1v18M12 1v18M17 1v18M1 3h18M1 7.500h18M1 12h18M1 17h18" stroke="#aaa" fill="none" stroke-width=".7"/></svg><i class="caret"></i>
    <svg viewBox="0 0 20 20"><path d="M1 2h18v16H1z" fill="#c8d6ea" stroke="#4a5c78" stroke-width="1.300"/><path d="M3 4h6v5H3zM11 4h6v5h-6zM3 11h6v5H3zM11 11h6v5h-6z" fill="#92b8e4" stroke="#6a8ab4" stroke-width=".8"/></svg><i class="caret"></i>
  </div>
  <svg class="assist" viewBox="0 0 21 21"><path d="M10.500 0A10.500 10.500 0 0121 10.500V21H10.500a10.500 10.500 0 010-21z"/><path d="M5 12.500l8-6h3M8 13l7-4.500M12 13l4-2.500" stroke="#fff" stroke-width="1.300" fill="none"/></svg>
</main>

<section class="timeline">
  <div class="player">
    <svg viewBox="0 0 16 18"><path d="M1 1v16" stroke="#555" stroke-width="2"/><path d="M15 1v16L3 9z" fill="#555"/></svg>
    <svg viewBox="0 0 16 18"><path d="M12 2v14L0 9zM13 6h3v6h-3z" fill="#555"/></svg>
    <svg viewBox="0 0 16 18"><path d="M0 0l16 9-16 9z" fill="#555"/></svg>
    <svg viewBox="0 0 16 18"><path d="M4 2v14l12-7zM0 6h3v6H0z" fill="#555"/></svg>
    <svg viewBox="0 0 16 18"><path d="M15 1v16" stroke="#555" stroke-width="2"/><path d="M1 1v16l12-8z" fill="#555"/></svg>
  </div>
  <ol class="steps">
    <li><svg><use href="#t-sketch"/></svg></li><li><svg><use href="#t-extrude"/></svg></li><li class="grp"><svg><use href="#t-pattern"/></svg></li>
    <li><svg><use href="#t-joint"/></svg></li><li><svg><use href="#t-joint"/></svg></li><li><svg><use href="#t-joint"/></svg></li><li><svg><use href="#t-joint"/></svg></li><li><svg><use href="#t-joint"/></svg></li>
    <li><svg><use href="#t-sketch"/></svg></li><li><svg><use href="#t-extrude"/></svg></li><li class="grp"><svg><use href="#t-pattern"/></svg></li>
    <li><svg><use href="#t-joint"/></svg></li><li><svg><use href="#t-joint"/></svg></li><li><svg><use href="#t-joint"/></svg></li><li><svg><use href="#t-joint"/></svg></li><li><svg><use href="#t-joint"/></svg></li>
    <li><svg><use href="#t-sketch"/></svg></li><li><svg><use href="#t-extrude"/></svg></li><li class="grp"><svg><use href="#t-pattern"/></svg></li>
    <li><svg><use href="#t-joint"/></svg></li><li><svg><use href="#t-joint"/></svg></li><li><svg><use href="#t-joint"/></svg></li><li><svg><use href="#t-joint"/></svg></li><li><svg><use href="#t-joint"/></svg></li>
    <li><svg><use href="#t-mirror"/></svg></li>
    <li><svg><use href="#move"/></svg></li><li><svg><use href="#move"/></svg></li><li><svg><use href="#move"/></svg></li><li><svg><use href="#move"/></svg></li><li><svg><use href="#move"/></svg></li><li><svg><use href="#move"/></svg></li><li><svg><use href="#move"/></svg></li><li><svg><use href="#move"/></svg></li><li><svg><use href="#move"/></svg></li><li><svg><use href="#move"/></svg></li><li><svg><use href="#move"/></svg></li><li><svg><use href="#move"/></svg></li><li><svg><use href="#move"/></svg></li>
  </ol>
  <svg class="marker" viewBox="0 0 16 40"><path d="M0 0h16v5l-6 6v29H6V11L0 5z" fill="#666"/></svg>
  <svg class="tl-gear"><use href="#gear"/></svg>
</section>

<footer class="taskbar">
  <div class="weather">
    <svg viewBox="0 0 34 36"><path d="M3 24q14 4 17-11 9 4 7 14-4 9-14 8-8-2-10-11z" fill="#f5961e"/><path d="M5 18q-5 0-5-4 0-3 4-4 2-5 6-4 4 1 4 4 4 0 4 4t-4 4z" fill="#9cc0f6" stroke="#6f97dc" stroke-width=".6"/><path d="M17 33q-4 0-4-4 0-3 3-3 1-4 5-4t5 4q4 0 4 4 0 3-3 3z" fill="#a9c9fa" stroke="#6f97dc" stroke-width=".6"/></svg><b>2</b>
  </div>
  <div class="apps">
    <span><svg viewBox="0 0 30 30"><path d="M.5 1H14.500v14H.5zM15.500 1h14v14h-14zM.5 16H14.500v14H.5zM15.500 16h14v14h-14z" fill="url(#gWin)"/></svg></span>
    <span><svg viewBox="0 0 30 30"><circle cx="13" cy="12.500" r="10.500" fill="none" stroke="#222" stroke-width="2.800"/><path d="M21 21l6 7" stroke="#222" stroke-width="4" stroke-linecap="round"/></svg></span>
    <span><svg viewBox="0 0 30 30"><path d="M0 9h23v20H0z" fill="#262626"/><path d="M8 1h22v20H8z" fill="#f4f4f6"/><path d="M8 9h15v12H8z" fill="#b4b4b6"/></svg></span>
    <span><svg viewBox="0 0 30 30"><path d="M8 5q1-3 4-3h7q3 0 3.500 3l1 3h-4.500q-3 0-4 3.500l-2.500 7q-.8 2.500-3.500 2.500H4.500Q0 21 1.500 16z" fill="url(#gCopA)"/><path d="M14 2h5q3 0 3.500 3l1 3h-4.500z" fill="#1848c0"/><path d="M22.500 24q-1 3-4 3h-7q-3 0-3.500-3l-1-3h3q3 0 4-3.500l3-7Q18 8 21 8h4.500q4.500 0 3 5z" fill="url(#gCopB)"/><path d="M14 11q1-2 4-2.500L15 19q-1 2-4 2z" fill="#f2eaf4"/></svg></span>
    <span><svg viewBox="0 0 30 30"><path d="M8 6V3q0-2 2-2h10q2 0 2 2v3" fill="none" stroke="#35c1f1" stroke-width="2"/><path d="M.5 5h29v20q0 5-5 5h-19q-5 0-5-5z" fill="url(#gStore)"/><path d="M9.500 12h5v5h-5z" fill="#f35325"/><path d="M15.500 12h5v5h-5z" fill="#81bc06"/><path d="M9.500 18h5v5h-5z" fill="#05a6f0"/><path d="M15.500 18h5v5h-5z" fill="#ffba08"/></svg></span>
    <span><svg viewBox="0 0 30 30"><path d="M0 14A15 15 0 0130 13q0 7-7 7-5 0-5-3 1-2-1-4-8-6-17 1z" fill="url(#gEdge)"/><path d="M0 15q1-7 9-7 8 0 9 5-5-1-7 4 0 10 9 9 5 0 8-3-3 7-13 7Q1 29 0 15z" fill="#1478d0"/><path d="M11 16q-2 4 1 9 6 5 15.500-1.500Q24 30 16 30 7 26 9 19z" fill="#124f96"/></svg></span>
    <span><svg viewBox="0 0 30 30"><path d="M0 4q0-2 2-2h8l3 3h15q2 0 2 2v8H0z" fill="#e09c10"/><path d="M0 7h11l2-1.500h15q2 0 2 2v21H0z" fill="url(#gFold)"/><path d="M5 28.500v-4q0-3 3-3h14q3 0 3 3v4z" fill="#1670c0"/><path d="M9 25h12" stroke="#0c4a8a" stroke-width="1.500"/></svg></span>
    <span><svg viewBox="0 0 30 30"><path d="M0 0h30v30H0z" fill="#0096d6"/><text x="15" y="19" class="svg-hp" textLength="26">my<tspan class="hp">hp</tspan></text></svg></span>
    <span class="badged"><svg viewBox="0 0 30 30"><circle cx="14" cy="15" r="14.500" fill="#f4f8fb"/><circle cx="14" cy="15" r="13" fill="#0d93d2"/><path d="M8.500 11c0-7 11-7 11-1 0 4-5 4-5 9M14.500 22v3" fill="none" stroke="#fff" stroke-width="3.500"/></svg><b class="yellow"></b></span>
    <span><svg viewBox="0 0 30 30"><path d="M3 8l2-3 2 3 4-2q4-5 8-6 1 4 4 6 6 4 6 11-1 11-14 12Q3 29 1 17q0-6 2-9z" fill="url(#gFox)"/><circle cx="15" cy="17" r="6.500" fill="#7b42d8"/><path d="M4 11q6-3 9 1 3 1 3 3-3 1-4 3 2 5 7 3-6 6-11 1-4-4-4-11z" fill="#ff8a1f"/></svg></span>
    <span><svg viewBox="0 0 30 30"><path d="M6 1h24v8H6z" fill="#41a5ee"/><path d="M6 9h24v7H6z" fill="#2b7cd3"/><path d="M6 16h24v6H6z" fill="#185abd"/><path d="M6 22h24v7H6z" fill="#103f91"/><path d="M0 7h16v16H0z" fill="#185abd"/><text x="8" y="19.500" class="svg-w">W</text></svg></span>
    <span><svg viewBox="0 0 30 30"><path d="M1 0h16q4 0 4 4v18H5q-4 0-4-4z" fill="#efefef"/><path d="M4 17V5h11" fill="none" stroke="#d83b01" stroke-width="3.500" stroke-dasharray="4 2"/><path d="M17 6v16M5 20h14" fill="none" stroke="#aaa" stroke-width="2.500"/><path d="M17 20l8-3M17 20l-1 6" stroke="#666" stroke-width="2"/><circle cx="27" cy="16.500" r="2.600" fill="none" stroke="#0f93e0" stroke-width="1.800"/><circle cx="15.500" cy="27.500" r="2.600" fill="none" stroke="#0f93e0" stroke-width="1.800"/></svg></span>
    <span><svg viewBox="0 0 30 30"><path d="M4 8h26v21H4z" fill="#50565c"/><path d="M0 1h22v16H0z" fill="#19b5d8"/><path d="M4 5h2M8 5h2M12 5h2M16 5h2M4 9h2M8 9h2M12 9h2M16 9h2M6 13h10" stroke="#fff" stroke-width="2"/></svg></span>
    <span><svg viewBox="0 0 30 30"><path d="M.5 .5h29v29H.5z" fill="url(#gDev)" stroke="#070b28"/><text x="15" y="13.500" class="svg-dev" textLength="24">DEV</text><text x="16" y="26.500" class="svg-dev dark" textLength="26">C++</text></svg></span>
    <span><svg viewBox="0 0 30 30"><path d="M2 0h17l6 6v23H2z" fill="#f2f2f2" stroke="#ddd"/><path d="M4 4h12M4 8h16M4 12h16M4 16h12M4 20h10M4 24h12M8 2v25M14 2v18" stroke="#c5c5c5"/><path d="M17 24q-3 0-3-4t3-4h5v-1h-4q0-3 4-3t4 3v3q0 2-3 2h-3q-3 0-3 4z" fill="#3875ae"/><path d="M27 16q3 0 3 4t-3 4h-5v1h4q0 3-4 3t-4-3v-2q0-3 3-3h3q3 0 3-4z" fill="#ffc93b"/></svg></span>
    <span><svg viewBox="0 0 30 30"><path d="M3 1h23v3l-1 22H4z" fill="#b5d2ea"/><path d="M2 0h25v4H2zM2 26h25v3H2z" fill="#6289a6"/><path d="M5 6h19v18H5z" fill="#dcebf7"/><text x="10.500" y="17.500" class="svg-a">A</text><path d="M16 10h7M16 14h7M7 20h16" stroke="#4b85c8" stroke-width="1.400"/></svg></span>
    <span class="badged run"><svg><use href="#chrome"/></svg><b class="teal">M</b></span>
    <span class="badged run"><svg><use href="#chrome"/></svg><b class="pink">M</b></span>
    <span class="run"><svg viewBox="0 0 30 30"><path d="M2 4h13l-2 4H9l4 9-3 7z" fill="#f26f21"/><path d="M15 4h12v5L19 25h-7l9-17h-6z" fill="#111a3a"/></svg></span>
    <span class="run current"><svg viewBox="0 0 30 30"><path d="M1 3l3-3h22v4l2 0v24l-2 2H3l-2-3z" fill="#ff6a00"/><path d="M1 3l3-2v24H1z" fill="#ff9a50"/><path d="M4 21h24v7l-2 2H4z" fill="#8a3600"/><text x="15.500" y="16" class="svg-F">F</text><text x="16" y="28" class="svg-fus">FUS</text></svg></span>
  </div>
  <div class="tray">
    <svg class="chev" viewBox="0 0 14 8"><path d="M1 7l6-6 6 6" fill="none" stroke="#111" stroke-width="1.700"/></svg>
    <svg class="cloud" viewBox="0 0 20 16"><path d="M4 14Q0 13 1 9q1-3 4-3Q6 1 11 2q4 0 5 5 4 1 3 5-1 2-3 2z" fill="#bbb" stroke="#222" stroke-width="1.300"/><path d="M3 0l15 15.500" stroke="#222" stroke-width="1.500"/></svg>
    <svg class="sync" viewBox="0 0 20 20"><path d="M1 8q3-7 10-7 5 0 8 5M19 1v5h-5M1 18v-5h5M1 13q2 4 7 6" fill="none" stroke="#111" stroke-width="1.300"/><circle cx="15" cy="15" r="5" fill="#ff9a0c"/></svg>
    <div class="lang">ENG<br>IN</div>
    <svg class="wifi" viewBox="0 0 20 16"><g fill="none" stroke="#111" stroke-width="1.500"><path d="M1 6q9-9 18 0M3.800 9q6.200-6 12.400 0M6.500 11.800q3.500-3.300 7 0"/></g><circle cx="10" cy="14" r="1.600"/></svg>
    <svg class="vol" viewBox="0 0 20 16"><path d="M1 5.500h3L8 2v12l-4-3.500H1z" fill="none" stroke="#111" stroke-width="1.400"/><path d="M11 5q2 3 0 6" fill="none" stroke="#111" stroke-width="1.300"/><path d="M13.500 3q4 5 0 10M16 1q5 7 0 14" fill="none" stroke="#aaa" stroke-width="1.300"/></svg>
    <svg class="batt" viewBox="0 0 20 14"><rect x="1" y="1.500" width="16" height="11" rx="2.500" fill="none" stroke="#111" stroke-width="1.500"/><rect x="3" y="3.500" width="10" height="7" rx="1"/><path d="M18 5h1.700v4H18z"/></svg>
    <div class="clock">18:54<br><span class="date">02-03-2025</span></div>
  </div>
</footer>
</body>
</html>
```
FILE: styles.css
```css
* { box-sizing: border-box; }
body { margin: 0; width: 1920px; height: 1080px; overflow: hidden; display: flex; flex-direction: column; background: #fff; font-family: "Liberation Sans", Arial, sans-serif; font-size: 14px; color: #333; }
svg { display: block; flex: none; overflow: visible; }
.defs { position: absolute; width: 0; height: 0; }
ul, ol, p { margin: 0; padding: 0; list-style: none; }

.caret { display: inline-block; width: 8px; height: 7px; background: #333; clip-path: polygon(0 0, 100% 0, 50% 100%); flex: none; }
.caret.big { width: 9px; height: 7px; background: #666; }
.caret.dim { background: #929292; }

/* title bar */
.titlebar { height: 29px; flex: none; display: flex; align-items: center; padding-left: 3px; background: linear-gradient(90deg, #edf3f6, #ecf1fa 60%, #eef4f8); color: #111; }
.app-icon { width: 18px; height: 20px; margin-top: -1px; }
.title { margin: -2px 0 0 7px; font: 15px "Open Sans", sans-serif; letter-spacing: -0.29px; white-space: nowrap; }
.win-btns { width: 160px; height: 30px; margin-left: auto; }
.svg-f { font: bold 10px "Open Sans", sans-serif; fill: #fff; text-anchor: middle; }
.svg-tiny { font: bold 5px "Open Sans", sans-serif; fill: #fff; text-anchor: middle; }

/* document tabs */
.tabbar { height: 40px; flex: none; display: flex; align-items: flex-end; background: #cbcbcb; }
.quick { width: 245px; height: 40px; display: flex; align-items: center; padding-left: 11px; }
.q-grid { width: 18px; height: 18px; }
.q-doc { width: 17px; height: 20px; margin: 0 6px 0 24px; }
.q-save { width: 18px; height: 18px; margin: 0 24px 0 23px; }
.q-undo, .q-redo { width: 17px; height: 17px; margin-right: 7px; }
.q-redo { margin-left: 15px; }
.tab { width: 334px; height: 35px; margin-right: 4.700px; display: flex; align-items: center; justify-content: center; position: relative; border-radius: 5px 5px 0 0; background: #bababa; color: #666; font-size: 14.800px; letter-spacing: 0; padding-right: 15px; padding-top: 2px; }
.tab .cube { width: 18px; height: 20px; margin-right: 6px; }
.tab .close { position: absolute; right: 8px; top: 11px; width: 12px; height: 12px; color: #808080; }
.tab.active { background: #f1f1f1; color: #333; padding-right: 14px; }
.tab.home { width: 49px; margin-right: 5px; padding: 5px 0 0 3px; }
.tab.home svg { width: 20px; height: 18px; }
.tab.add { width: 34px; padding: 0; margin-left: 1px; }
.tab.add svg { width: 16px; height: 16px; }
.status { flex: 1; height: 40px; display: flex; align-items: center; gap: 21px; padding-left: 11px; }
.status svg { width: 20px; height: 20px; }
.avatar { width: 32px; height: 32px; margin-left: 5px; border-radius: 50%; background: #f1f1f1; color: #555; font: 14px/32px "Liberation Sans", sans-serif; text-align: center; letter-spacing: .5px; }

/* ribbon */
.ribbon { height: 106px; flex: none; display: flex; background: #f1f1f1; box-shadow: inset 0 -3px #f1f1f1, inset 0 -4px #c8c8c8; }
.workspace { width: 138px; height: 76px; margin: 13px 0 0 14px; border: 2px solid #cfcfcf; border-radius: 6px; display: flex; align-items: center; justify-content: center; gap: 7px; font-weight: bold; font-size: 14px; letter-spacing: -.3px; padding-bottom: 3px; }
.workspace .caret { width: 7px; height: 6px; margin-top: 1px; }
.ribbon-main { flex: 1; }
.rtabs { height: 30px; display: flex; margin-left: 21px; font-size: 14px; letter-spacing: -.28px; }
.rtabs span { width: 73px; padding-top: 6px; text-align: center; white-space: nowrap; margin-right: 34px; }
.rtabs span:nth-child(2) { margin-right: 40px; width: 74px; }
.rtabs span:nth-child(3) { width: 52px; margin-right: 44px; margin-left: 7px; }
.rtabs span:nth-child(4) { width: 110px; margin-right: 49px; margin-left: -1px; }
.rtabs span:nth-child(5) { width: 64px; margin-right: 51px; margin-left: -1px; }
.rtabs span:nth-child(6) { margin-right: 47px; }
.rtabs .on { color: #0696d7; font-weight: bold; border-bottom: 3.500px solid #0696d7; letter-spacing: -.6px; }
.panels { display: flex; margin-left: 6px; }
.panel { position: relative; height: 69px; padding-top: 3px; }
.panel + .panel::before { content: ""; position: absolute; left: 0; top: 3px; width: 1px; height: 64px; background: #cfcfcf; }
.icons { height: 41px; display: flex; justify-content: center; align-items: center; gap: 14px; padding-left: 2px; }
.icons svg { width: 40px; height: 40px; }
.panel p { display: flex; justify-content: center; align-items: center; gap: 5px; margin-top: 7px; height: 16px; font-size: 14px; letter-spacing: -.35px; }
.panel .caret { width: 7px; height: 6px; margin: -1px 1px 0 0; }
.create { width: 334px; }
.automate { width: 124px; }
.modify { width: 336px; }
.assemble { width: 123px; }
.configure { width: 130px; }
.construct { width: 130px; }
.construct p { padding-left: 3px; }
.inspect { width: 105px; }
.insert { width: 175px; }
.select { width: 102px; }
.select .icons { padding-left: 0; }
.select .icons svg { width: 48px; height: 48px; margin-left: -2px; }

/* canvas and browser */
.canvas { position: relative; height: 783px; flex: none; background: #fff; }
.browser { display: flex; flex-direction: column; height: 777px; width: 374px; margin-left: 5px; padding-top: 5px; }
.dock-head { height: 31px; flex: none; display: flex; align-items: center; padding: 0 13px 0 6px; border: 1px solid #c8c8c8; border-bottom-width: 2px; background: #f1f1f1; color: #666; letter-spacing: -.1px; }
.rewind { width: 12px; height: 8px; margin-right: 12px; }
.knob { width: 12px; height: 12px; margin-left: auto; }
.comments { margin-top: auto; border-top: 0; padding-left: 30px; letter-spacing: -.35px; }
.tree { padding-top: 6px; }
.tree li { height: 25px; margin-bottom: 5px; display: flex; align-items: center; }
.tri { width: 9px; height: 13px; margin: 0 13px 0 45px; }
.chip { height: 25px; display: flex; align-items: center; padding: 0 14px 0 5px; background: #f1f1f1; letter-spacing: -.11px; white-space: nowrap; }
.chip.comp { padding-right: 12px; }
.chip .eye { width: 19px; height: 12px; margin-right: 11px; }
.chip .eye.off { height: 14px; }
.chip .folder { width: 21px; height: 16px; margin-right: 17px; }
.chip.nf, .chip.nv { padding-left: 4px; }
.chip.nv { padding-right: 12px; }
.chip .gear { width: 16px; height: 16px; margin-right: 17px; color: #777; }
.chip .anchor { width: 21px; height: 21px; margin-right: 17px; }
.chip .body { width: 17px; height: 18px; margin: -3px 19px 0 2px; }
.open { width: 10px; height: 10px; margin: 0 13px 0 22px; }
.root .chip { width: 220px; padding: 0 0 0 4px; }
.root .eye { margin-right: 8px; }
.sel { width: 158px; height: 20px; display: flex; align-items: center; padding-left: 5px; background: #979797; color: #fff; letter-spacing: 0; }
.asm { width: 18px; height: 18px; margin-right: 18px; }
.sel b { font-size: 13.700px; }
.radio { width: 18px; height: 18px; margin: -2px 0 0 5px; }

.model { position: absolute; left: 780px; top: 135px; width: 280px; height: 220px; }
.viewcube { position: absolute; left: 1810px; top: 5px; width: 100px; height: 110px; }
.vc-face { font: bold 10.500px "Liberation Sans", sans-serif; fill: #8f8f8f; }
.vc-face.small { font-size: 9.500px; }
.vc-face.tiny { font-size: 8px; }
.vc-ax { font: 14px "Liberation Sans", sans-serif; stroke-width: .5px; }
.green { fill: #7dee7d; stroke: #7dee7d; }
.red { fill: #f06a6a; stroke: #f06a6a; }
.blue { fill: #8a8af5; stroke: #8a8af5; }
.navbar { position: absolute; left: 813px; top: 745px; width: 296px; height: 30px; display: flex; align-items: center; padding-left: 4px; background: #f1f1f1; }
.navbar svg { width: 20px; height: 20px; margin-right: 12.500px; }
.navbar svg:has(+ i) { margin-right: 2.700px; }
.navbar .caret { width: 7px; height: 6px; margin-right: 8.600px; }
.navbar svg:first-child { margin-right: 6px; }
.navbar svg:nth-of-type(5) { margin-right: 6px; }
.navbar .caret:nth-of-type(1) { margin-right: 7.500px; }
.assist { position: absolute; left: 1884px; top: 753px; width: 21px; height: 21px; }

/* timeline */
.timeline { height: 63px; flex: none; display: flex; padding-top: 7px; background: #f1f1f1; border-top: 1px solid #cfcfcf; border-bottom: 1px solid #b3b7bf; }
.player { display: flex; align-items: center; gap: 15px; width: 178px; height: 45px; padding-left: 13px; }
.player svg { width: 16px; height: 18px; }
.steps { display: flex; padding-top: 11px; }
.steps li { position: relative; width: 30px; height: 32px; display: flex; justify-content: center; border-bottom: 2px solid #cbcbcb; }
.steps li:first-child { width: 15px; margin-left: 15px; justify-content: flex-start; }
.steps li:first-child svg { margin-left: -10px; }
.steps li:last-child { width: 17px; margin-right: 2px; justify-content: flex-start; padding-left: 5px; }
.steps svg { width: 20px; height: 20px; }
.steps li::after { content: ""; position: absolute; left: 14px; bottom: -1px; width: 3px; height: 7px; background: #cbcbcb; }
.steps li:first-child::after { left: 0; width: 2px; }
.steps .grp::after { content: "+"; left: 6px; bottom: -8px; width: 13px; height: 13px; background: #777; color: #fff; font: bold 14px/13px "Liberation Sans", sans-serif; text-align: center; }
.marker { width: 15px; height: 40px; margin: 4px 0 0 3px; }
.tl-gear { width: 19px; height: 19px; margin: 13px 17px 0 auto; color: #808080; }

/* taskbar */
.taskbar { height: 59px; flex: none; display: flex; background: linear-gradient(90deg, #deebf4 0, #d8e3ee 170px, #efe1ec 260px, #ebe1ec 450px, #e1e3f1 600px, #d8e4f0 740px, #e4e1ef 880px, #e8e1f1 990px, #d3dce6 1110px, #d0dee6 1260px, #d6e3ef 1500px, #dce5f0 1920px); }
.weather { position: relative; width: 334px; padding: 6px 0 0 26px; }
.weather svg { width: 34px; height: 36px; }
.weather b { position: absolute; left: 40px; top: 8px; width: 20px; height: 20px; border-radius: 50%; background: #c42b1c; color: #fff; font: 14px/20px "Open Sans", sans-serif; text-align: center; }
.apps { display: flex; padding-left: 26px; }
.apps span { position: relative; width: 55.080px; height: 59px; display: flex; justify-content: center; padding-top: 14px; }
.apps svg { width: 30px; height: 30px; }
.apps b { position: absolute; right: 6px; top: 8px; width: 20px; height: 20px; border-radius: 50%; color: #fff; font: 13px/20px "Open Sans", sans-serif; text-align: center; }
.yellow { background: #fcc20c; }
.teal { background: #06483e; }
.pink { background: #c2185b; }
.run::after { content: ""; position: absolute; bottom: 6px; left: 24px; width: 8px; height: 4px; border-radius: 2px; background: #7b8087; }
.current::before { content: ""; position: absolute; left: 3px; top: 5px; width: 49px; height: 49px; border-radius: 5px; background: #edf3f8; border: 1px solid #e3e9ef; }
.current svg { position: relative; }
.apps .current::after { left: 18px; width: 20px; background: #0078d4; }
.svg-hp { font: 11px "Open Sans", sans-serif; fill: #fff; text-anchor: middle; }
.hp { font-style: italic; font-weight: bold; font-size: 12.500px; }
.svg-w { font: bold 12px "Open Sans", sans-serif; fill: #fff; text-anchor: middle; }
.svg-dev { font: bold 12px "Liberation Sans", sans-serif; fill: #fff; text-anchor: middle; }
.dark { fill: #071540; }
.svg-a { font: bold 14px "Liberation Serif", serif; fill: #ec7424; text-anchor: middle; }
.svg-F { font: bold 15px "Open Sans", sans-serif; fill: #fff; text-anchor: middle; }
.svg-fus { font: bold 6.500px "Open Sans", sans-serif; fill: #fff; text-anchor: middle; }
.tray { display: flex; align-items: center; margin-left: auto; padding-right: 24px; font: 14px/20px "Open Sans", sans-serif; color: #111; }
.chev { width: 14px; height: 8px; margin-right: 23px; }
.cloud { width: 20px; height: 16px; margin-right: 20px; }
.sync { width: 20px; height: 20px; margin-right: 23px; }
.lang { width: 30px; text-align: center; margin: -3px 22px 0 0; }
.wifi { width: 20px; height: 16px; margin-right: 10px; }
.vol { width: 20px; height: 16px; margin-right: 10px; }
.batt { width: 20px; height: 14px; margin-right: 20px; }
.clock { width: 78px; margin-top: -3px; text-align: right; white-space: nowrap; }
.date { letter-spacing: .42px; margin-right: -.42px; }
```
